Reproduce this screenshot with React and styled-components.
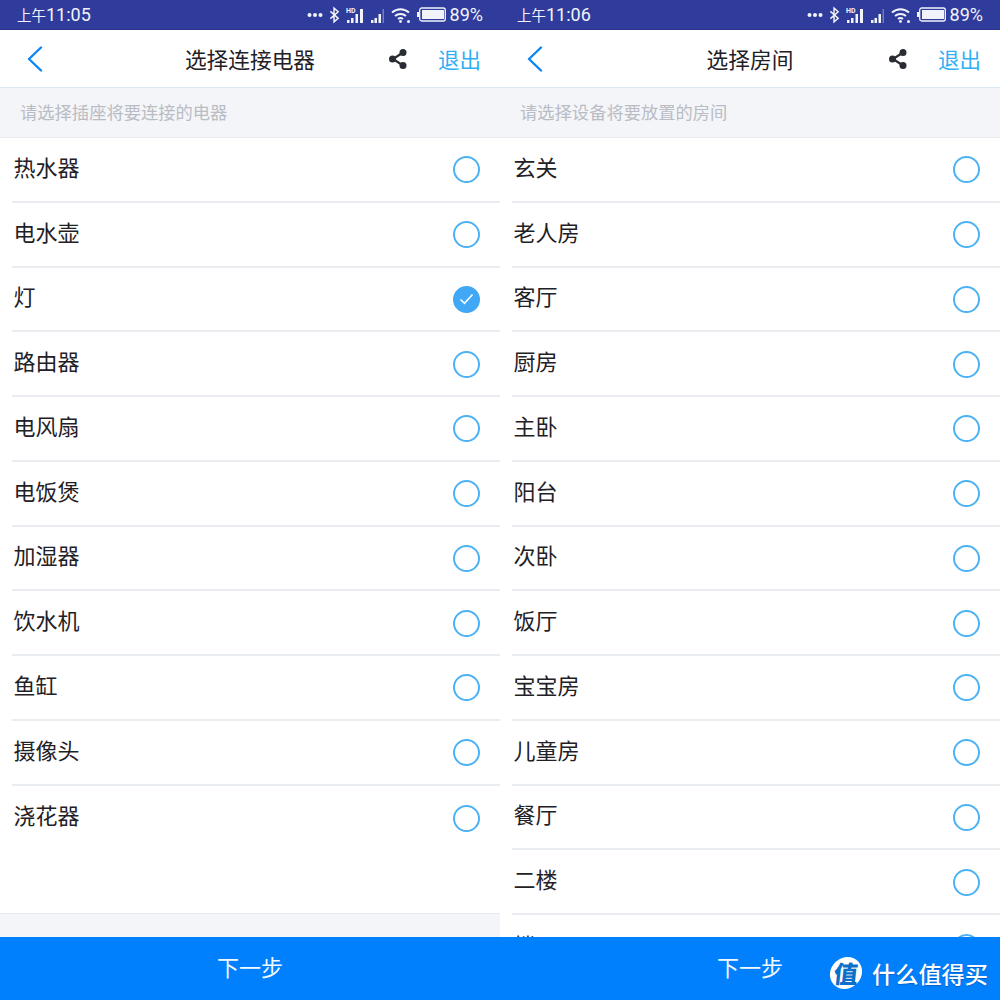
import React from 'react'
import styled, { createGlobalStyle } from 'styled-components'

const GlobalStyle = createGlobalStyle`
  html, body {
    margin: 0;
    padding: 0;
    background: #fff;
  }
  body {
    font-family: "Noto Sans CJK SC", "Noto Sans", sans-serif;
  }
  * {
    box-sizing: border-box;
  }
`

const Page = styled.div`
  position: relative;
  display: grid;
  grid-template-columns: 500px 500px;
  width: 1000px;
  height: 1000px;
  overflow: hidden;
`

const Phone = styled.section`
  display: flex;
  flex-direction: column;
  height: 1000px;
  overflow: hidden;
  background: #fff;
`

const StatusBar = styled.div`
  flex: 0 0 30px;
  display: flex;
  align-items: center;
  justify-content: space-between;
  padding: 0 17px 0 17px;
  background: #2f3c9b;
  border-bottom: 1px solid #28348a;
  color: #f2f3fa;
`

const Time = styled.span`
  font-family: Roboto, "Noto Sans CJK SC", sans-serif;
  font-size: 18px;
  line-height: 29px;
`

const Meridiem = styled.span`
  font-family: "Noto Sans CJK SC", sans-serif;
  font-size: 14.5px;
`

const StatusIcons = styled.div`
  display: flex;
  align-items: center;
  gap: 6px;
`

const Battery = styled.span`
  font-family: Roboto, sans-serif;
  font-size: 18px;
  line-height: 29px;
  margin-left: -2px;
`

const NavBar = styled.header`
  flex: 0 0 58px;
  display: grid;
  grid-template-columns: 1fr auto 1fr;
  align-items: center;
  padding: 0 19px;
  background: #fff;
  border-bottom: 1px solid #d9e9f6;
`

const BackButton = styled.div`
  display: flex;
  align-items: center;
  margin-left: 8px;
`

const Title = styled.h1`
  margin: 0;
  font-size: 21.7px;
  font-weight: 400;
  line-height: 56px;
  color: #1f2126;
`

const NavActions = styled.div`
  display: flex;
  align-items: center;
  justify-content: flex-end;
  gap: 30px;
`

const ExitLink = styled.span`
  font-size: 21.5px;
  line-height: 56px;
  color: #2fb0f5;
`

const Hint = styled.div`
  flex: 0 0 50px;
  padding-left: 20px;
  background: #f4f5f9;
  border-bottom: 1px solid #e8eaee;
  color: #b9bcc3;
  font-size: 17.3px;
  line-height: 48px;
`

const List = styled.ul`
  flex: 1 1 0;
  min-height: 0;
  margin: 0;
  padding: 0;
  list-style: none;
  overflow: hidden;
  background: #fff;
`

const Row = styled.li`
  display: flex;
  align-items: center;
  justify-content: space-between;
  height: 64.75px;
  margin-left: 12px;
  padding: 0 20px 0 1.5px;
  border-bottom: 2px solid #e9ecf1;

  &:last-child {
    border-bottom: 0;
  }
`

const RowLabel = styled.span`
  font-size: 22px;
  line-height: 30px;
  margin-top: -7px;
  color: #1f2126;
`

const Radio = styled.span`
  display: flex;
  align-items: center;
  justify-content: center;
  width: 27px;
  height: 27px;
  margin-top: 1px;
  border-radius: 50%;
  border: 2px solid ${(p) => (p.$checked ? '#40a8f6' : '#4cb2f6')};
  background: ${(p) => (p.$checked ? '#40a8f6' : '#fff')};
`

const Spacer = styled.div`
  flex: 0 0 24px;
  background: #f4f5f9;
  border-top: 1px solid #e6e7eb;
`

const NextButton = styled.button`
  flex: 0 0 63px;
  display: block;
  width: 100%;
  padding: 0 0 4px;
  border: 0;
  background: #0180fe;
  color: #f4f9ff;
  font-family: inherit;
  font-size: 22px;
  line-height: 59px;
  text-align: center;
`

const Watermark = styled.div`
  position: absolute;
  right: 12px;
  bottom: 11px;
  display: flex;
  align-items: center;
  gap: 10px;
`

const LogoBadge = styled.span`
  display: flex;
  align-items: center;
  justify-content: center;
  width: 32px;
  height: 32px;
  border-radius: 50%;
  background: #fff;
  color: #0a6fc9;
  font-size: 24px;
  font-weight: 900;
  line-height: 32px;
  transform: skewX(-6deg);
`

const WatermarkText = styled.span`
  color: #fff;
  font-size: 23.2px;
  font-weight: 500;
  line-height: 32px;
  text-shadow: 0 1px 1px rgba(0, 40, 110, 0.35);
`

const Dots = () => (
  <svg width="16" height="6" viewBox="0 0 16 6">
    <circle cx="2.500" cy="3" r="2" fill="#f2f3fa" />
    <circle cx="8" cy="3" r="2" fill="#f2f3fa" />
    <circle cx="13.500" cy="3" r="2" fill="#f2f3fa" />
  </svg>
)

const Bluetooth = () => (
  <svg width="11" height="18" viewBox="0 0 12 18" fill="none" stroke="#f2f3fa" strokeWidth="1.600">
    <path d="M1.500 5l8.500 7.500-4.500 4V1.500l4.500 4L1.500 13" />
  </svg>
)

const Signal = ({ hd }) => (
  <svg width={hd ? 18 : 15} height="18" viewBox={hd ? '0 0 18 18' : '0 0 15 18'}>
    {hd && (
      <text x="0" y="7" fontFamily="Roboto, sans-serif" fontSize="7" fontWeight="700" fill="#f2f3fa">
        HD
      </text>
    )}
    {hd ? (
      <path d="M1 14h2.500v3H1zM5 12h2.500v5H5zM9.500 8H12v9H9.500zM14 3h3v14h-3z" fill="#f2f3fa" />
    ) : (
      <>
        <path d="M1 14h2.500v3H1zM4.500 12H7v5H4.500zM8.500 8H11v9H8.500z" fill="#f2f3fa" />
        <path d="M12.500 3H14v14h-1.500z" fill="#f2f3fa" opacity="0.35" />
      </>
    )}
  </svg>
)

const Wifi = () => (
  <svg width="20" height="18" viewBox="0 0 20 18" fill="none" stroke="#f2f3fa" strokeWidth="2">
    <path d="M1 6.500c5-4.500 12-4.500 17 0" />
    <path d="M4 10c3-2.600 8-2.600 11 0" />
    <path d="M7 13c1.500-1.200 3.500-1.200 5 0" />
    <circle cx="9.500" cy="15.500" r="1.400" fill="#f2f3fa" stroke="none" />
    <circle cx="17.500" cy="15.500" r="1.500" fill="#f2f3fa" stroke="none" />
  </svg>
)

const BatteryIcon = () => (
  <svg width="29" height="15" viewBox="0 0 29 15">
    <path d="M0 5h2v5H0z" fill="#f2f3fa" />
    <rect x="2.700" y="1" width="25.600" height="13" rx="2" fill="none" stroke="#f2f3fa" strokeWidth="1.300" />
    <rect x="5" y="3" width="22" height="9" fill="#f2f3fa" />
  </svg>
)

const BackIcon = () => (
  <svg width="16" height="26" viewBox="0 0 16 26" fill="none" stroke="#0c86f5" strokeWidth="2.400" strokeLinecap="round" strokeLinejoin="round">
    <path d="M14 1.500L2 13l12 11.500" />
  </svg>
)

const ShareIcon = () => (
  <svg width="20" height="22" viewBox="0 0 20 22" fill="#2a2c33" stroke="#2a2c33">
    <path d="M15 4.500L5 11l10 6.500" fill="none" strokeWidth="2.200" />
    <circle cx="15" cy="4.500" r="3.500" stroke="none" />
    <circle cx="4.500" cy="11" r="3.500" stroke="none" />
    <circle cx="15" cy="17.500" r="3.500" stroke="none" />
  </svg>
)

const CheckIcon = () => (
  <svg width="15" height="12" viewBox="0 0 15 12" fill="none" stroke="#fff" strokeWidth="1.600">
    <path d="M1.500 6.500l4 3.800 8-8.800" />
  </svg>
)

const screens = [
  {
    meridiem: '上午',
    time: '11:05',
    title: '选择连接电器',
    hint: '请选择插座将要连接的电器',
    items: ['热水器', '电水壶', '灯', '路由器', '电风扇', '电饭煲', '加湿器', '饮水机', '鱼缸', '摄像头', '浇花器'],
    checked: '灯',
    spacer: true,
  },
  {
    meridiem: '上午',
    time: '11:06',
    title: '选择房间',
    hint: '请选择设备将要放置的房间',
    items: ['玄关', '老人房', '客厅', '厨房', '主卧', '阳台', '次卧', '饭厅', '宝宝房', '儿童房', '餐厅', '二楼', '楼下'],
    spacer: false,
  },
]

export default function App() {
  return (
    <Page>
      <GlobalStyle />
      {screens.map((screen) => (
        <Phone key={screen.title}>
          <StatusBar>
            <Time>
              <Meridiem>{screen.meridiem}</Meridiem>
              {screen.time}
            </Time>
            <StatusIcons>
              <Dots />
              <Bluetooth />
              <Signal hd />
              <Signal />
              <Wifi />
              <BatteryIcon />
              <Battery>89%</Battery>
            </StatusIcons>
          </StatusBar>
          <NavBar>
            <BackButton>
              <BackIcon />
            </BackButton>
            <Title>{screen.title}</Title>
            <NavActions>
              <ShareIcon />
              <ExitLink>退出</ExitLink>
            </NavActions>
          </NavBar>
          <Hint>{screen.hint}</Hint>
          <List>
            {screen.items.map((item) => (
              <Row key={item}>
                <RowLabel>{item}</RowLabel>
                <Radio $checked={item === screen.checked}>
                  {item === screen.checked && <CheckIcon />}
                </Radio>
              </Row>
            ))}
          </List>
          {screen.spacer && <Spacer />}
          <NextButton>下一步</NextButton>
        </Phone>
      ))}
      <Watermark>
        <LogoBadge>值</LogoBadge>
        <WatermarkText>什么值得买</WatermarkText>
      </Watermark>
    </Page>
  )
}
